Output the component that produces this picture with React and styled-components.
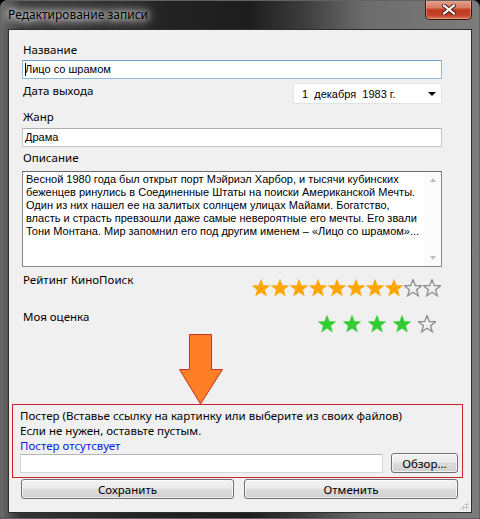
import React from 'react'
import styled, { createGlobalStyle } from 'styled-components'

const GlobalStyle = createGlobalStyle`
    html, body {
        margin: 0;
        padding: 0;
        background: #000;
    }
`
const Frame = styled.div`
    width: 480px;
    height: 519px;
    box-sizing: border-box;
    border: 1px solid #626262;
    border-radius: 7px 7px 0 0;
    background: linear-gradient(90deg, #6a6a6a 0%, #333 4%, #242424 30%, #1d1d1d 52%, #3c3c3c 63%, #6c6c6c 76%, #7c7c7c 100%);
    display: flex;
    flex-direction: column;
    overflow: hidden;
`
const TitleBar = styled.div`
    height: 28px;
    display: flex;
    align-items: flex-start;
    padding-left: 7px;
`
const TitleText = styled.div`
    margin-top: 6px;
    font-family: "Noto Sans", "Liberation Sans", sans-serif;
    font-size: 12px;
    line-height: 16px;
    color: #000;
    text-shadow: 0 0 6px #fff, 0 0 10px #fff, 0 0 16px rgba(255,255,255,.9), 0 0 24px rgba(255,255,255,.8);
`
const CloseButton = styled.div`
    margin-left: auto;
    margin-right: 7px;
    margin-top: -1px;
    width: 47px;
    height: 20px;
    box-sizing: border-box;
    border: 1px solid #3b1208;
    border-top: none;
    border-radius: 0 0 5px 5px;
    background: linear-gradient(180deg, #e9a591 0%, #d77a62 40%, #c0391f 52%, #c4402a 80%, #dc7a5c 100%);
    box-shadow: inset 0 0 0 1px rgba(255,220,200,.35);
    display: flex;
    align-items: center;
    justify-content: center;
`
const Client = styled.div`
    margin: 0 7px;
    height: 484px;
    box-sizing: border-box;
    background: #f0f0f0;
    border: 1px solid #2e2e2e;
    padding: 0 13px;
    display: flex;
    flex-direction: column;
    position: relative;
`
const Label = styled.div`
    font-family: "Noto Sans", "Liberation Sans", sans-serif;
    font-size: 11.5px;
    line-height: 16px;
    color: #000;
    padding-left: 1px;
    margin-top: ${props => props.top || 0}px;
`
const TextBox = styled.div`
    width: 420px;
    height: 19px;
    box-sizing: border-box;
    margin-top: ${props => props.top || 0}px;
    background: #fff;
    border: 1px solid ${props => props.focused ? '#8fb8d9' : '#c5c5c5'};
    border-top-color: ${props => props.focused ? '#6f9ec4' : '#abadb3'};
    font-family: "Liberation Sans", Arial, sans-serif;
    font-size: 11px;
    line-height: 17px;
    padding-left: 2px;
    display: flex;
    align-items: center;
    position: relative;
`
const Caret = styled.span`
    position: absolute;
    left: 2px;
    top: 2px;
    width: 1px;
    height: 13px;
    background: #000;
`
const DateRow = styled.div`
    margin-top: 4px;
    display: flex;
    justify-content: space-between;
    align-items: flex-start;
`
const DatePicker = styled.div`
    width: 149px;
    height: 21px;
    box-sizing: border-box;
    margin-right: 16px;
    background: #fff;
    border: 1px solid #e3e3e3;
    display: flex;
    align-items: center;
    padding-left: 8px;
    font-family: "Liberation Sans", Arial, sans-serif;
    font-size: 11px;
    white-space: pre;
`
const DropArrow = styled.span`
    margin-left: auto;
    margin-right: 5px;
    width: 0;
    height: 0;
    border-left: 4px solid transparent;
    border-right: 4px solid transparent;
    border-top: 4px solid #000;
`
const Memo = styled.div`
    margin-top: 5px;
    width: 420px;
    height: 96px;
    box-sizing: border-box;
    background: #fff;
    border: 1px solid #828790;
    border-top-color: #6a6a6a;
    display: flex;
`
const MemoText = styled.div`
    flex: 1;
    padding: 1px 0 0 3px;
    font-family: "Liberation Sans", Arial, sans-serif;
    font-size: 11px;
    line-height: 13px;
    color: #000;
    white-space: nowrap;
    overflow: hidden;
`
const ScrollBar = styled.div`
    width: 17px;
    background: #fbfbfb;
    display: flex;
    flex-direction: column;
    justify-content: space-between;
    align-items: center;
    padding: 6px 0;
    box-sizing: border-box;
`
const ScrollArrow = styled.span`
    width: 0;
    height: 0;
    border-left: 3.5px solid transparent;
    border-right: 3.5px solid transparent;
    ${props => props.up ? 'border-bottom: 4px solid #bdbdbd;' : 'border-top: 4px solid #bdbdbd;'}
`
const RatingRow = styled.div`
    margin-top: ${props => props.top}px;
    display: flex;
    justify-content: space-between;
    align-items: flex-start;
`
const Stars = styled.div`
    display: flex;
    gap: ${props => props.gap}px;
    margin-top: ${props => props.top}px;
    margin-right: ${props => props.right}px;
`
const ArrowBox = styled.div`
    margin-left: 156px;
    height: 71px;
`
const PosterBox = styled.div`
    margin: 0 -5px 0 -10px;
    height: 74px;
    box-sizing: border-box;
    border: 1px solid #c8242c;
    padding: 3px 4px 0 7px;
    font-family: "Noto Sans", "Liberation Sans", sans-serif;
    font-size: 11.5px;
    line-height: 15px;
    color: #000;
`
const PosterLine = styled.div`
    color: ${props => props.link ? '#0b18e0' : '#000'};
`
const PathRow = styled.div`
    height: 20px;
    display: flex;
    justify-content: space-between;
    align-items: flex-end;
`
const PathInput = styled.div`
    width: 363px;
    height: 19px;
    box-sizing: border-box;
    background: #fff;
    border: 1px solid #d8d8d8;
    border-top-color: #b5b5b5;
`
const Button = styled.div`
    width: ${props => props.width}px;
    height: 20px;
    box-sizing: border-box;
    border: 1px solid #707070;
    border-radius: 3px;
    background: linear-gradient(180deg, #f2f2f2 0%, #ebebeb 45%, #dddddd 50%, #cfcfcf 100%);
    box-shadow: inset 0 0 0 1px rgba(255,255,255,.7);
    display: flex;
    align-items: center;
    justify-content: center;
    font-family: "Noto Sans", "Liberation Sans", sans-serif;
    font-size: 11.5px;
    color: #000;
`
const ButtonRow = styled.div`
    margin-top: 1px;
    margin-left: -1px;
    display: flex;
    gap: 10px;
`
const Grip = styled.div`
    position: absolute;
    right: 2px;
    bottom: 2px;
    width: 10px;
    height: 10px;
    background:
        radial-gradient(circle, #a8a8a8 0.8px, transparent 1.2px) 0 0 / 3px 3px;
    clip-path: polygon(100% 0, 100% 100%, 0 100%);
`

const starPoints = '9,0.5 11.3,6.6 17.6,6.7 12.6,10.7 14.3,16.8 9,13.2 3.7,16.8 5.4,10.7 0.4,6.7 6.7,6.6'

const Star = ({ color, filled }) => (
    <svg width="18" height="18" viewBox="0 0 18 18">
        <polygon
            points={starPoints}
            fill={filled ? color : 'none'}
            stroke={filled ? color : '#8c8c8c'}
            strokeWidth={filled ? 0.6 : 1.3}
            strokeLinejoin="miter"
        />
    </svg>
)

const description = [
    'Весной 1980 года был открыт порт Мэйриэл Харбор, и тысячи кубинских',
    'беженцев ринулись в Соединенные Штаты на поиски Американской Мечты.',
    'Один из них нашел ее на залитых солнцем улицах Майами. Богатство,',
    'власть и страсть превзошли даже самые невероятные его мечты. Его звали',
    'Тони Монтана. Мир запомнил его под другим именем – «Лицо со шрамом»...',
]

const App = () => {
    return (
        <Frame>
            <GlobalStyle />
            <TitleBar>
                <TitleText>Редактирование записи</TitleText>
                <CloseButton>
                    <svg width="14" height="11" viewBox="0 0 14 11">
                        <path d="M2 1.5 L12 9.5 M12 1.5 L2 9.5" stroke="#3a1a12" strokeWidth="4" strokeLinecap="square" />
                        <path d="M2 1.5 L12 9.5 M12 1.5 L2 9.5" stroke="#fff" strokeWidth="2.2" strokeLinecap="square" />
                    </svg>
                </CloseButton>
            </TitleBar>
            <Client>
                <Label top={12}>Название</Label>
                <TextBox top={2} focused>
                    <Caret />
                    Лицо со шрамом
                </TextBox>
                <DateRow>
                    <Label>Дата выхода</Label>
                    <DatePicker>
                        {'1  декабря  1983 г.'}
                        <DropArrow />
                    </DatePicker>
                </DateRow>
                <Label top={5}>Жанр</Label>
                <TextBox top={3}>Драма</TextBox>
                <Label top={3}>Описание</Label>
                <Memo>
                    <MemoText>
                        {description.map(line => <div key={line}>{line}</div>)}
                    </MemoText>
                    <ScrollBar>
                        <ScrollArrow up />
                        <ScrollArrow />
                    </ScrollBar>
                </Memo>
                <RatingRow top={5}>
                    <Label>Рейтинг КиноПоиск</Label>
                    <Stars gap={1} top={7} right={17}>
                        {[...Array(10)].map((_, i) => <Star key={i} color="#ffa500" filled={i < 8} />)}
                    </Stars>
                </RatingRow>
                <RatingRow top={12}>
                    <Label>Моя оценка</Label>
                    <Stars gap={7} top={6} right={22}>
                        {[...Array(5)].map((_, i) => <Star key={i} color="#33cc33" filled={i < 4} />)}
                    </Stars>
                </RatingRow>
                <ArrowBox>
                    <svg width="46" height="72" viewBox="0 0 46 72" style={{ display: 'block' }}>
                        <polygon points="11.5,1.5 33.5,1.5 33.5,36.5 44.5,36.5 22.5,71 1.5,36.5 11.5,36.5" fill="#ff7f27" stroke="#c8302a" strokeWidth="1" />
                    </svg>
                </ArrowBox>
                <PosterBox>
                    <PosterLine>Постер (Вставье ссылку на картинку или выберите из своих файлов)</PosterLine>
                    <PosterLine>Если не нужен, оставьте пустым.</PosterLine>
                    <PosterLine link>Постер отсутсвует</PosterLine>
                    <PathRow>
                        <PathInput />
                        <Button width={67}>Обзор...</Button>
                    </PathRow>
                </PosterBox>
                <ButtonRow>
                    <Button width={214}>Сохранить</Button>
                    <Button width={215}>Отменить</Button>
                </ButtonRow>
                <Grip />
            </Client>
        </Frame>
    )
}

export default App
